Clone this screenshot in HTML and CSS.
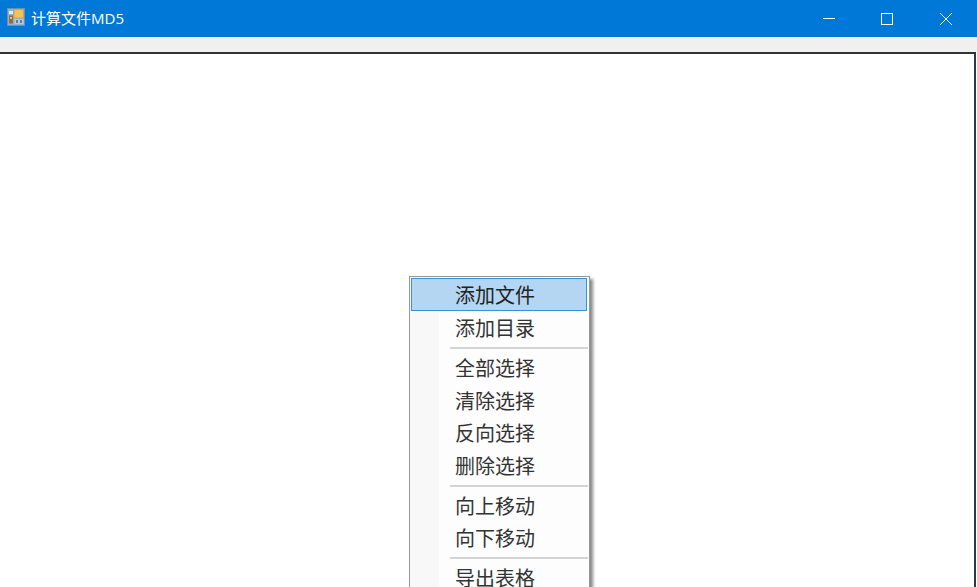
FILE: index.html
```html
<!DOCTYPE html>
<html lang="zh-CN">
<head>
<meta charset="utf-8">
<title>计算文件MD5</title>
<link rel="stylesheet" href="styles.css">
</head>
<body>
<div class="window">
  <header class="titlebar">
    <svg class="app-icon" width="18" height="18" viewBox="0 0 18 18">
      <rect x="0.5" y="0.5" width="17" height="17" fill="#8fb2d2" stroke="#6d90b0"/>
      <rect x="7" y="1.5" width="9.5" height="8.5" fill="#efc35a" stroke="#c79a3a" stroke-width="0.6"/>
      <rect x="2" y="3" width="4" height="3" fill="#e3eaf0"/>
      <rect x="2" y="7.5" width="4" height="8" fill="#9a6a3a"/>
      <rect x="3" y="9" width="2" height="2" fill="#e9c27a"/>
      <rect x="7.5" y="11" width="9" height="5" fill="#b3cbe0"/>
      <rect x="9" y="12" width="2" height="3" fill="#5f7f9f"/>
      <rect x="13" y="12" width="2" height="3" fill="#5f7f9f"/>
    </svg>
    <span class="title">计算文件MD5</span>
    <div class="controls">
      <div class="control">
        <svg width="12" height="12" viewBox="0 0 12 12"><path d="M0 5.5H12" stroke="#fff" stroke-width="1" fill="none"/></svg>
      </div>
      <div class="control">
        <svg width="12" height="12" viewBox="0 0 12 12"><rect x="0.5" y="0.5" width="11" height="11" stroke="#fff" stroke-width="1" fill="none"/></svg>
      </div>
      <div class="control">
        <svg width="12" height="12" viewBox="0 0 12 12"><path d="M0 0L12 12M12 0L0 12" stroke="#fff" stroke-width="1" fill="none"/></svg>
      </div>
    </div>
  </header>
  <div class="strip"></div>
  <main class="list"></main>
</div>
<nav class="menu">
  <div class="item active">添加文件</div>
  <div class="item">添加目录</div>
  <div class="sep"></div>
  <div class="item">全部选择</div>
  <div class="item">清除选择</div>
  <div class="item">反向选择</div>
  <div class="item">删除选择</div>
  <div class="sep"></div>
  <div class="item">向上移动</div>
  <div class="item">向下移动</div>
  <div class="sep"></div>
  <div class="item">导出表格</div>
</nav>
</body>
</html>
```
FILE: styles.css
```css
html, body {
  margin: 0;
  padding: 0;
  height: 100%;
  overflow: hidden;
  background: #fff;
  font-family: "Noto Sans CJK SC", "Noto Sans", sans-serif;
}
.window {
  height: 587px;
  display: flex;
  flex-direction: column;
}
.titlebar {
  height: 37px;
  flex: none;
  background: #0078d7;
  color: #fff;
  display: flex;
  align-items: center;
  padding-left: 7px;
}
.app-icon {
  flex: none;
  margin-top: -3px;
}
.title {
  margin-left: 6px;
  margin-top: -3px;
  font-family: "Open Sans", "Noto Sans CJK SC", sans-serif;
  font-size: 15px;
}
.controls {
  margin-left: auto;
  padding-right: 2px;
  display: flex;
}
.control {
  width: 58.5px;
  height: 36px;
  display: flex;
  align-items: center;
  justify-content: center;
}
.strip {
  height: 15px;
  flex: none;
  background: #f0f0f0;
}
.list {
  flex: 1;
  width: 976px;
  box-sizing: border-box;
  background: #fff;
  border-top: 2px solid #333;
  border-right: 2px solid #2b3a46;
}
.menu {
  position: absolute;
  left: 409px;
  top: 276px;
  width: 181px;
  height: 311px;
  overflow: hidden;
  box-sizing: border-box;
  border: 1px solid #979797;
  border-bottom: 0;
  padding: 1px;
  background: linear-gradient(to right, #f8f8f8 0 29px, #fdfdfd 29px);
  box-shadow: 3px 3px 3px #8a8a8a;
  color: #333;
  font-size: 20px;
}
.item {
  height: 32.5px;
  line-height: 33.5px;
  padding-left: 44px;
  white-space: nowrap;
}
.item.active {
  box-sizing: border-box;
  height: 33px;
  margin-right: 1px;
  background: #b5d6f2;
  border: 1px solid #3a8fd6;
  padding-left: 43px;
  line-height: 31px;
  color: #222;
}
.sep {
  height: 2px;
  margin: 3.5px 0 2px 39px;
  background: #d4d4d4;
}
```
